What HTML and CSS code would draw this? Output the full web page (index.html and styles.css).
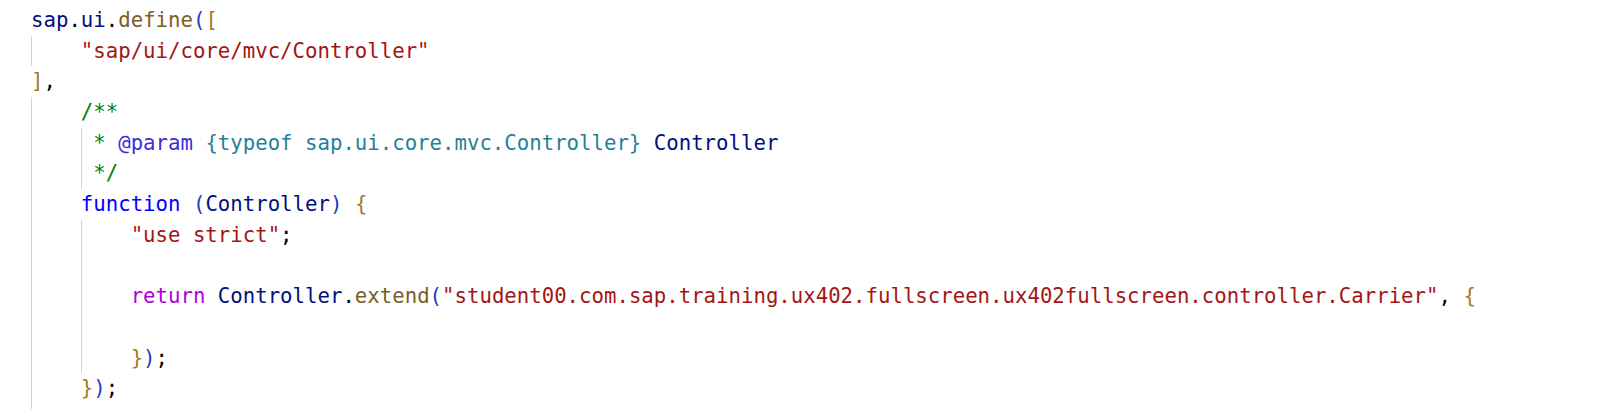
FILE: index.html
```html
<!DOCTYPE html>
<html>
<head>
<meta charset="utf-8">
<link rel="stylesheet" href="styles.css">
</head>
<body>
<div class="editor">
  <div class="line"><span class="code"><span class="var">sap</span>.<span class="var">ui</span>.<span class="fn">define</span><span class="p1">(</span><span class="b2">[</span></span></div>
  <div class="line"><span class="ind"></span><span class="code"><span class="str">"sap/ui/core/mvc/Controller"</span></span></div>
  <div class="line"><span class="code"><span class="b2">]</span>,</span></div>
  <div class="line"><span class="ind"></span><span class="code"><span class="cm">/**</span></span></div>
  <div class="line"><span class="ind"></span><span class="ind1"></span><span class="code"><span class="cm">* </span><span class="tag">@param</span> <span class="type">{typeof sap.ui.core.mvc.Controller}</span> <span class="var">Controller</span></span></div>
  <div class="line"><span class="ind"></span><span class="ind1"></span><span class="code"><span class="cm">*/</span></span></div>
  <div class="line"><span class="ind"></span><span class="code"><span class="kw">function</span> <span class="p1">(</span><span class="var">Controller</span><span class="p1">)</span> <span class="b2">{</span></span></div>
  <div class="line"><span class="ind"></span><span class="ind"></span><span class="code"><span class="str">"use strict"</span>;</span></div>
  <div class="line"><span class="ind"></span><span class="ind"></span><span class="code"></span></div>
  <div class="line"><span class="ind"></span><span class="ind"></span><span class="code"><span class="ctl">return</span> <span class="var">Controller</span>.<span class="fn">extend</span><span class="p1">(</span><span class="str">"student00.com.sap.training.ux402.fullscreen.ux402fullscreen.controller.Carrier"</span>, <span class="b2">{</span></span></div>
  <div class="line"><span class="ind"></span><span class="ind"></span><span class="code"></span></div>
  <div class="line"><span class="ind"></span><span class="ind"></span><span class="code"><span class="b2">}</span><span class="p1">)</span>;</span></div>
  <div class="line"><span class="ind"></span><span class="code"><span class="b2">}</span><span class="p1">)</span>;</span></div>
  <div class="line"><span class="ind"></span><span class="code"></span></div>
</div>
</body>
</html>
```
FILE: styles.css
```css
html, body {
  margin: 0;
  padding: 0;
  background: #ffffff;
}

.editor {
  height: 409px;
  overflow: hidden;
  padding: 5px 0 0 31px;
  box-sizing: border-box;
  font-family: "DejaVu Sans Mono", "Liberation Mono", monospace;
  font-size: 20.7px;
  color: #000000;
}

.line {
  display: flex;
  height: 30.7px;
  line-height: 30.7px;
  white-space: pre;
}

.ind {
  flex: none;
  width: 4ch;
  box-sizing: border-box;
  border-left: 1px solid #d3d3d3;
}

.ind1 {
  flex: none;
  width: 1ch;
  box-sizing: border-box;
  border-left: 1px solid #d3d3d3;
}

.code {
  white-space: pre;
}

.var { color: #001080; }
.fn { color: #795e26; }
.str { color: #a31515; }
.cm { color: #008000; }
.tag { color: #3a2fd6; }
.type { color: #267f99; }
.kw { color: #0000ff; }
.ctl { color: #af00db; }
.p1 { color: #1d3bc4; }
.b2 { color: #a8781c; }
```
